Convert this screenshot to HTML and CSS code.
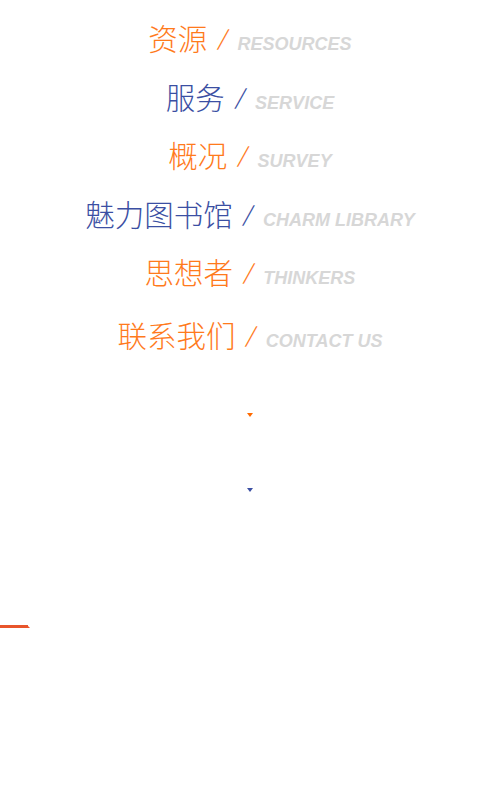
FILE: index.html
```html
<!DOCTYPE html>
<html lang="zh-CN">
<head>
<meta charset="utf-8">
<title>导航</title>
<link rel="stylesheet" href="styles.css">
</head>
<body>
<ul class="nav">
  <li class="item orange"><span class="cn">资源</span><span class="sep">/</span><span class="en">RESOURCES</span></li>
  <li class="item blue"><span class="cn">服务</span><span class="sep">/</span><span class="en">SERVICE</span></li>
  <li class="item orange"><span class="cn">概况</span><span class="sep">/</span><span class="en">SURVEY</span></li>
  <li class="item blue"><span class="cn">魅力图书馆</span><span class="sep">/</span><span class="en">CHARM LIBRARY</span></li>
  <li class="item orange"><span class="cn">思想者</span><span class="sep">/</span><span class="en">THINKERS</span></li>
  <li class="item orange last"><span class="cn">联系我们</span><span class="sep">/</span><span class="en">CONTACT US</span></li>
</ul>
<div class="arrows">
  <span class="tri tri-orange"></span>
  <span class="tri tri-blue"></span>
</div>
<div class="redline"></div>
</body>
</html>
```

FILE: styles.css
```css
html, body {
  margin: 0;
  padding: 0;
  background: #ffffff;
}

body {
  width: 500px;
  font-family: "Noto Sans CJK SC", "Liberation Sans", sans-serif;
}

.nav {
  list-style: none;
  margin: 0;
  padding: 8px 0 0 0;
}

.item {
  height: 58.5px;
  line-height: 58.5px;
  text-align: center;
  white-space: nowrap;
}

.item.last {
  margin-top: 4.5px;
}

.cn {
  font-family: "Noto Sans CJK SC", sans-serif;
  font-weight: 300;
  font-size: 29.5px;
}

.sep {
  display: inline-block;
  font-family: "Noto Sans CJK SC", sans-serif;
  font-weight: 400;
  font-style: italic;
  font-size: 21px;
  margin: 0 12px 0 10px;
  position: relative;
  top: -4px;
}

.orange .cn,
.orange .sep {
  color: #ff7a1c;
}

.blue .cn,
.blue .sep {
  color: #3b4fa3;
}

.en {
  font-family: "Liberation Sans", Arial, sans-serif;
  font-weight: bold;
  font-style: italic;
  font-size: 18px;
  color: #d7d7d7;
}

.arrows {
  display: flex;
  flex-direction: column;
  align-items: center;
  padding-top: 49px;
}

.tri {
  display: block;
  width: 0;
  height: 0;
  border-left: 3.5px solid transparent;
  border-right: 3.5px solid transparent;
  border-top: 4px solid;
}

.tri-orange {
  border-top-color: #ff6a00;
}

.tri-blue {
  border-top-color: #3b4fa3;
  margin-top: 71px;
}

.redline {
  position: relative;
  margin-top: 133px;
  width: 28px;
  height: 3px;
  background: #e8552b;
}

.redline::after {
  content: "";
  position: absolute;
  left: 28px;
  bottom: 0;
  width: 0;
  height: 0;
  border-bottom: 2px solid #e8552b;
  border-right: 2px solid transparent;
}
```
